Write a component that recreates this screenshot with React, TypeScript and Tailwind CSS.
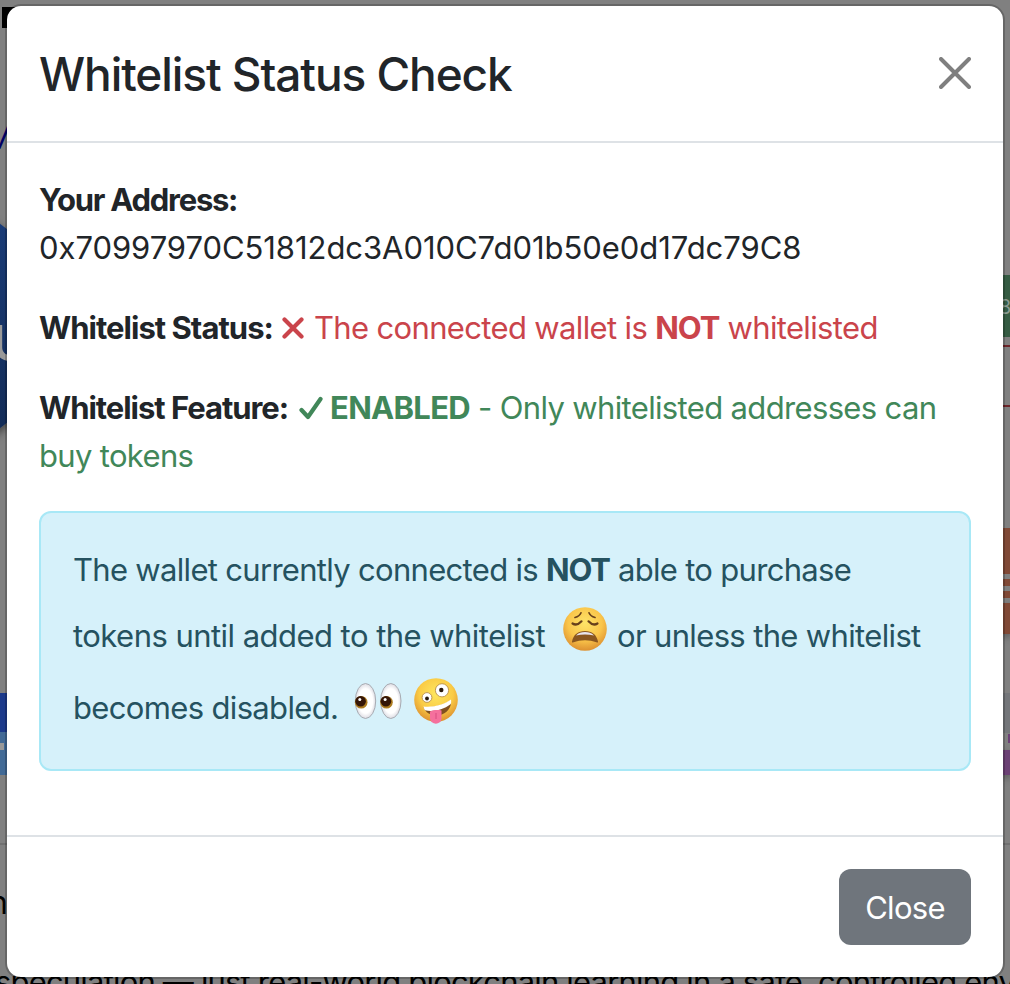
import { useId } from "react";

function WearyFace() {
  const id = useId();
  return (
    <svg className="h-[44px] w-[44px] shrink-0" viewBox="0 0 44 44" role="img">
      <defs>
        <radialGradient id={id} cx="50%" cy="36%" r="65%">
          <stop offset="0" stopColor="#fde368" />
          <stop offset="0.6" stopColor="#fac54a" />
          <stop offset="1" stopColor="#dc8f30" />
        </radialGradient>
      </defs>
      <circle cx="22" cy="22" r="21.8" fill={`url(#${id})`} />
      <g fill="none" stroke="#68401b" strokeLinecap="round">
        <path d="M12 10.500Q16.500 9.500 18 5.800M32 10.500Q27.500 9.500 26 5.800" strokeWidth="1.7" />
        <path d="M9.500 16.500Q14 19.300 18.500 14.300M34.500 16.500Q30 19.300 25.500 14.300" strokeWidth="2.2" />
      </g>
      <path d="M9 34.500C10.500 27.500 15 24 22 24s11.500 3.500 13 10.500c.2 1.200-.5 1.300-1.500.8-7-2.800-16-2.800-23 0-1 .5-1.700.4-1.500-.8Z" fill="#8a561f" />
      <path d="M13 28.500C15.500 25.700 18.500 25 22 25s6.500.7 9 3.500c-5.500-1.300-12.500-1.300-18 0Z" fill="#e8e4ee" />
    </svg>
  );
}

function Eyes() {
  const id = useId();
  return (
    <svg className="h-[36px] w-[48px] shrink-0" viewBox="0 0 48 36" role="img">
      <defs>
        <radialGradient id={id}>
          <stop offset="0.7" stopColor="#ffffff" />
          <stop offset="1" stopColor="#dddce3" />
        </radialGradient>
      </defs>
      {[0, 25.3].map((x) => (
        <g key={x} transform={`translate(${x} 0)`}>
          <ellipse cx="11.500" cy="18" rx="10.200" ry="17.500" fill={`url(#${id})`} stroke="#a2a5ab" strokeWidth="0.9" />
          <circle cx="7.200" cy="19.300" r="6.300" fill="#ad7c20" />
          <circle cx="6.600" cy="18.300" r="5.300" fill="#351607" />
          <circle cx="5.800" cy="16.500" r="1.500" fill="#fff" />
        </g>
      ))}
    </svg>
  );
}

function ZanyFace() {
  const id = useId();
  return (
    <svg className="h-[46px] w-[44px] shrink-0" viewBox="0 0 44 46" role="img">
      <defs>
        <radialGradient id={id} cx="50%" cy="36%" r="65%">
          <stop offset="0" stopColor="#fde760" />
          <stop offset="0.6" stopColor="#facb45" />
          <stop offset="1" stopColor="#dc8f30" />
        </radialGradient>
      </defs>
      <circle cx="22" cy="22" r="21.800" fill={`url(#${id})`} />
      <circle cx="13" cy="19.500" r="4.900" fill="#fff" stroke="#b98f48" strokeWidth="0.9" />
      <circle cx="13" cy="20.500" r="1.900" fill="#28190c" />
      <circle cx="28" cy="12.300" r="6.600" fill="#fff" stroke="#b98f48" strokeWidth="0.9" />
      <circle cx="27.300" cy="12" r="2.200" fill="#28190c" />
      <path d="M9.500 29C20 29.800 30 27 37 22c1 7-4 14-12 15.200C17 38 11.500 35 9.500 29Z" fill="#805020" />
      <path d="M9.500 28.500C20 29.500 30 26.500 37 21.500c.4 2.500.2 3.700-.5 4.800C29 32 19 34 11 32.300c-.8-1-1.200-2.200-1.500-3.800Z" fill="#fff" />
      <path d="M16 33.500c4-1.500 8-1.700 11.500-1v7.500c0 7.500-11 7.500-11.500.3Z" fill="#f5709d" />
      <path d="M22 35v6" stroke="#d84c80" strokeWidth="1" />
    </svg>
  );
}

function Backdrop() {
  return (
    <div className="absolute inset-0 flex flex-col overflow-hidden bg-[#808080] text-black">
      <div className="flex h-[958px] shrink-0 justify-between">
        <div className="flex w-[8px] flex-col whitespace-nowrap">
          <div className="mt-[7px] ml-[2px] h-[21px] w-5 shrink-0 bg-black" />
          <div className="mt-[90px] -ml-[22px] h-[40px] shrink-0 text-[31px] leading-[40px] text-[#000066] italic">W</div>
          <div className="mt-[42px] -ml-[206px] flex h-[252px] w-[260px] shrink-0 items-center rounded-[50%] bg-linear-to-b from-[#1a3d7a] to-[#122a54] pl-[198px] text-[50px] leading-[50px] font-semibold text-[#999] shadow-[0_4px_8px_#444]">
            <span className="mt-[34px]">U</span>
          </div>
          <div className="mt-[241px] h-[39px] shrink-0 bg-[#1c3a8b]" />
          <div className="flex h-[43px] shrink-0 bg-[#426a96] pt-[11px]">
            <div className="h-[7px] w-[4px] bg-[#999]" />
          </div>
          <div className="mt-[68px] h-[2px] shrink-0 bg-[#707070]" />
          <div className="mt-[34px] -ml-[11px] shrink-0 text-[32px] leading-[48px]">n</div>
        </div>
        <div className="flex w-[8px] flex-col">
          <div className="mt-[275px] h-[62px] shrink-0 bg-[#355c43] pt-[19px] text-[20px] leading-[26px] text-[#8b9b91]">
            <span className="-ml-[3px]">8</span>
          </div>
          <div className="mt-[8px] h-[62px] shrink-0 border-y-2 border-[#6c2429]" />
          <div className="mt-[121px] h-[46px] shrink-0 bg-[#804936]" />
          <div className="mt-[5px] h-[7px] shrink-0 bg-[#804936]" />
          <div className="mt-[5px] h-[7px] shrink-0 bg-[#804936]" />
          <div className="mt-[5px] h-[31px] shrink-0 bg-[#804936] shadow-[0_3px_7px_#555]" />
          <div className="mt-[59px] h-[40px] shrink-0 bg-[#74767a]" />
          <div className="mt-px ml-[6px] h-[9px] shrink-0 bg-[#6c4175]" />
          <div className="mt-[7px] h-[25px] shrink-0 bg-[#6c4175] shadow-[0_3px_7px_#555]" />
          <div className="mt-[68px] h-[2px] shrink-0 bg-[#707070]" />
        </div>
      </div>
      <p className="-ml-[5px] text-[31px] leading-[48px] tracking-[-0.82px] whitespace-nowrap">
        speculation — just real-world blockchain learning in a safe, controlled environment
      </p>
    </div>
  );
}

export default function App() {
  return (
    <main className="relative h-[984px] w-[1010px] overflow-hidden font-['Inter','Liberation_Sans',sans-serif] text-[31px] leading-[48px] text-[#212529]">
      <Backdrop />
      <section
        role="dialog"
        className="relative mt-1 ml-[5px] flex h-[975px] w-[1000px] flex-col rounded-[16px] border-2 border-black/20 bg-white bg-clip-padding whitespace-nowrap"
      >
        <header className="flex h-[137px] shrink-0 items-center justify-between border-b-2 border-[#dee2e6] px-8">
          <h1 className="text-[46px] leading-[60px] font-medium tracking-[-1.07px]">Whitelist Status Check</h1>
          <button aria-label="Close dialog" className="-mt-0.5">
            <svg className="h-[32px] w-[32px]" viewBox="0 0 32 32" fill="none" stroke="#7f7f7f" strokeWidth="4" strokeLinecap="round">
              <path d="M2 2 30 30M30 2 2 30" />
            </svg>
          </button>
        </header>
        <div className="flex-1 px-8 pt-[33px]">
          <p><strong className="font-bold tracking-[-1.25px]">Your Address:</strong></p>
          <p className="tracking-[-0.05px]">0x70997970C51812dc3A010C7d01b50e0d17dc79C8</p>
          <p className="mt-8 flex text-[#ca444b]">
            <strong className="w-[243px] font-bold tracking-[-0.97px] text-[#212529]">Whitelist Status:</strong>
            <svg className="mt-[13px] mr-[10px] h-[22px] w-[22px]" viewBox="0 0 22 22" fill="none" stroke="currentColor" strokeWidth="4.2" strokeLinecap="round">
              <path d="m2.500 2.500 17 17M19.500 2.500l-17 17" />
            </svg>
            <span className="tracking-[-0.65px]">The connected wallet is <strong className="font-bold tracking-[-1px]">NOT</strong> whitelisted</span>
          </p>
          <p className="mt-8 flex text-[#418759]">
            <strong className="w-[260px] font-bold tracking-[-1.03px] text-[#212529]">Whitelist Feature:</strong>
            <svg className="mt-[12px] mr-[7px] h-[24px] w-[24px]" viewBox="0 0 24 24" fill="none" stroke="currentColor" strokeWidth="4.2" strokeLinecap="round" strokeLinejoin="round">
              <path d="m2.500 14 6.500 7L21.500 3" />
            </svg>
            <span className="tracking-[-0.65px]"><strong className="font-bold tracking-[-0.7px]">ENABLED</strong> - Only whitelisted addresses can</span>
          </p>
          <p className="tracking-[-0.67px] text-[#418759]">buy tokens</p>
          <div className="mt-[31px] h-[260px] rounded-[12px] border-2 border-[#a8e8f6] bg-[#d6f1fa] pt-[33px] pl-8 tracking-[-0.65px] text-[#255260]">
            <p className="tracking-[-0.69px]">The wallet currently connected is <strong className="font-bold tracking-[-1.1px]">NOT</strong> able to purchase</p>
            <div className="mt-[12px] flex h-[60px] items-center">
              <span className="w-[490px] tracking-[-0.54px]">tokens until added to the whitelist</span>
              <span className="-mt-[14px] mr-[10px]"><WearyFace /></span>
              <span>or unless the whitelist</span>
            </div>
            <div className="mt-[12px] flex h-[60px] items-center">
              <span className="w-[281px]">becomes disabled.</span>
              <span className="-mt-[14px] mr-[12px]"><Eyes /></span>
              <span className="-mt-[14px]"><ZanyFace /></span>
            </div>
          </div>
        </div>
        <footer className="flex h-[142px] shrink-0 items-center justify-end border-t-2 border-[#dee2e6] pr-8">
          <button className="h-[76px] w-[132px] rounded-[12px] bg-[#6f757c] pt-0.5 tracking-[-0.7px] text-white">Close</button>
        </footer>
      </section>
    </main>
  );
}
